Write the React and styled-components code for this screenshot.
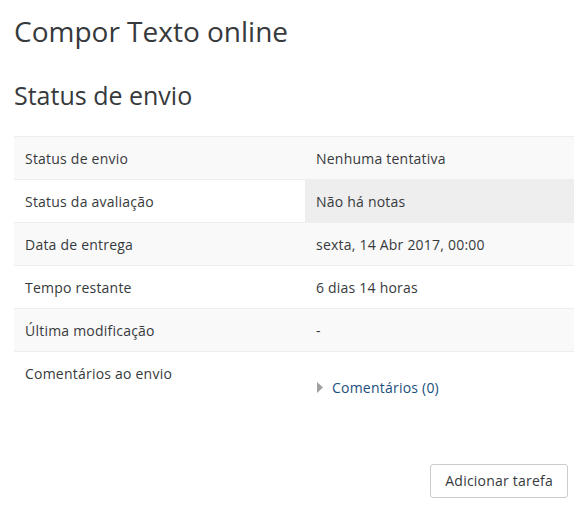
import React from 'react';
import styled, { createGlobalStyle } from 'styled-components';

const GlobalStyle = createGlobalStyle`
  html, body {
    margin: 0;
    padding: 0;
    background: #fff;
  }
  body {
    font-family: "Open Sans", "Liberation Sans", sans-serif;
    color: #373a3c;
    font-size: 14px;
    line-height: 1.5;
    letter-spacing: 0.22px;
    overflow: hidden;
  }
`;

const Page = styled.div`
  padding: 15px 0 0 14px;
`;

const Title = styled.h2`
  margin: 0;
  font-size: 28px;
  font-weight: 400;
  line-height: 1.2;
  letter-spacing: 0;
  color: #373a3c;
`;

const SubTitle = styled.h3`
  margin: 31px 0 26px;
  font-size: 25px;
  font-weight: 400;
  line-height: 1.2;
  letter-spacing: 0;
  color: #373a3c;
`;

const Table = styled.div`
  display: grid;
  grid-template-columns: 291px 1fr;
`;

const Cell = styled.div`
  padding: ${(p) => (p.$tall ? '11px 11px 40px' : '11px 11px 10px')};
  border-top: 1px solid #eceeef;
  background: ${(p) => (p.$shade ? '#eeeeee' : p.$stripe ? '#f9f9f9' : '#fff')};
  min-height: 21px;
  box-sizing: content-box;
`;

const Toggle = styled.a`
  display: flex;
  align-items: center;
  gap: 9px;
  margin-top: 14px;
  color: #1a4f7e;
  text-decoration: none;
`;

const Arrow = styled.svg`
  width: 6px;
  height: 11px;
  flex: none;
  margin-left: 1px;
`;

const Footer = styled.div`
  display: flex;
  justify-content: flex-end;
  padding: 40px 6px 0 0;
`;

const Button = styled.button`
  font-family: inherit;
  font-size: 14px;
  line-height: 1.5;
  letter-spacing: 0.22px;
  color: #373a3c;
  background: #fff;
  border: 1px solid #cccccc;
  border-radius: 3px;
  padding: 5px 14px;
  height: 34px;
`;

const rows = [
  ['Status de envio', 'Nenhuma tentativa'],
  ['Status da avaliação', 'Não há notas', true],
  ['Data de entrega', 'sexta, 14 Abr 2017, 00:00'],
  ['Tempo restante', '6 dias 14 horas'],
  ['Última modificação', '-'],
];

export default function App() {
  return (
    <>
      <GlobalStyle />
      <Page>
        <Title>Compor Texto online</Title>
        <SubTitle>Status de envio</SubTitle>
        <Table>
          {rows.map(([label, value, shade], i) => (
            <React.Fragment key={label}>
              <Cell $stripe={i % 2 === 0}>{label}</Cell>
              <Cell $stripe={i % 2 === 0} $shade={shade}>{value}</Cell>
            </React.Fragment>
          ))}
          <Cell $tall>Comentários ao envio</Cell>
          <Cell>
            <Toggle href="#">
              <Arrow viewBox="0 0 6 11">
                <path d="M0 0 L6 5.5 L0 11 Z" fill="#a0a0a0" />
              </Arrow>
              Comentários (0)
            </Toggle>
          </Cell>
        </Table>
        <Footer>
          <Button>Adicionar tarefa</Button>
        </Footer>
      </Page>
    </>
  );
}
